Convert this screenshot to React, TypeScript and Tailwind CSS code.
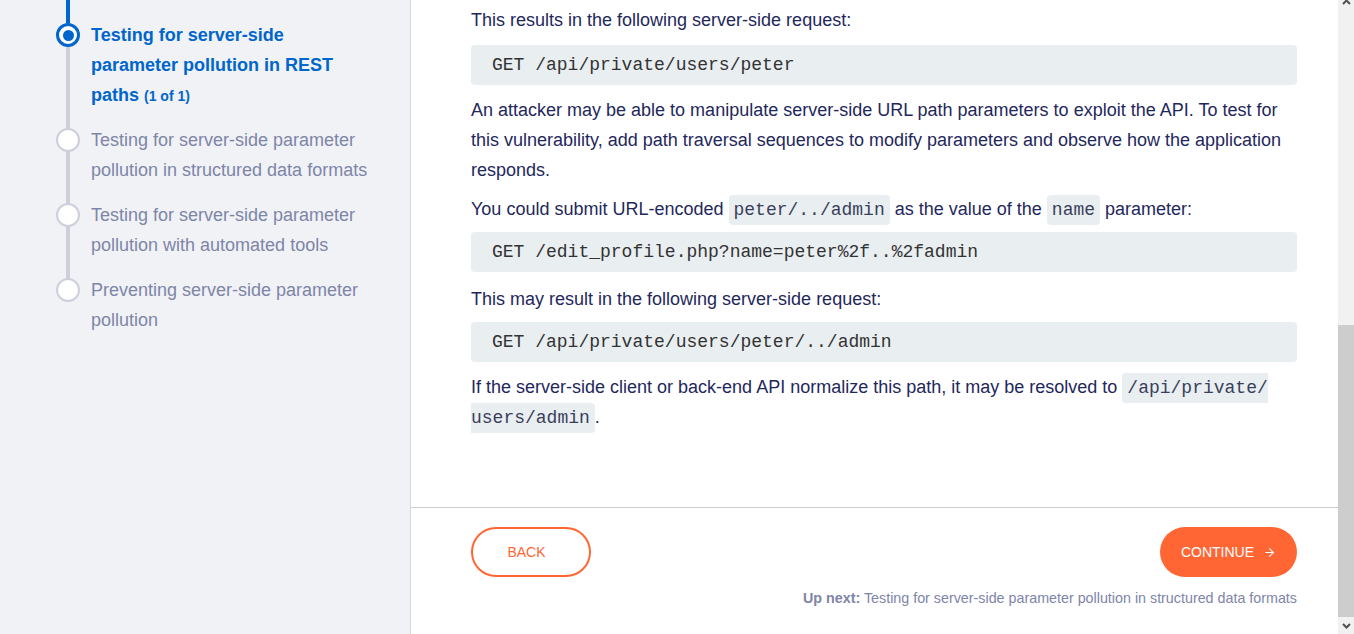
import { ArrowRight } from "lucide-react";

const steps = [
  { title: "Testing for server-side parameter pollution in REST paths", active: true },
  { title: "Testing for server-side parameter pollution in structured data formats" },
  { title: "Testing for server-side parameter pollution with automated tools" },
  { title: "Preventing server-side parameter pollution" },
];

function Code({ children }: { children: React.ReactNode }) {
  return (
    <code className="rounded-[4px] bg-[#e9eef1] px-[5px] py-[5px] font-['Liberation_Mono',monospace] text-[18px] leading-none text-[#3a3f5c]">
      {children}
    </code>
  );
}

function CodeBlock({ children, className = "mb-[10px]" }: { children: string; className?: string }) {
  return (
    <pre
      className={`flex h-[40px] items-center rounded-[4px] bg-[#e9eef1] px-[21px] font-['Liberation_Mono',monospace] text-[18px] text-[#333333] ${className}`}
    >
      {children}
    </pre>
  );
}

function Sidebar() {
  return (
    <aside className="w-[411px] shrink-0 border-r border-[#d5d8e0] bg-[#f0f2f5] pl-[56px] pt-[20px]">
      <div className="relative">
        <div className="absolute left-[10px] top-[-20px] h-[23px] w-[4px] bg-[#0066cc]" />
        <div className="absolute left-[10px] top-[3px] h-[267px] w-[4px] bg-[#cdd0dc]" />
        <ul className="relative flex flex-col gap-[15px]">
          {steps.map((s) => (
            <li key={s.title} className="flex gap-[11px]">
              <div className="flex h-[30px] w-[24px] shrink-0 items-center justify-center">
                {s.active ? (
                  <span className="flex h-[24px] w-[24px] items-center justify-center rounded-full border-[3px] border-[#0066cc] bg-white">
                    <span className="h-[11px] w-[11px] rounded-full bg-[#0066cc]" />
                  </span>
                ) : (
                  <span className="h-[24px] w-[24px] rounded-full border-2 border-[#cdd0dc] bg-white" />
                )}
              </div>
              <p
                className={`w-[280px] text-[18px] leading-[30px] ${
                  s.active ? "font-bold text-[#0066cc]" : "text-[#7e85a8]"
                }`}
              >
                {s.title}
                {s.active ? <span className="ml-[5px] text-[14px] leading-none">(1 of 1)</span> : null}
              </p>
            </li>
          ))}
        </ul>
      </div>
    </aside>
  );
}

export default function App() {
  return (
    <div className="flex h-[634px] w-full overflow-hidden bg-white font-['Liberation_Sans',Arial,sans-serif]">
      <Sidebar />
      <main className="flex min-w-0 flex-1 flex-col">
        <div className="h-[508px] shrink-0 border-b border-[#cccccc] pl-[60px] pr-[41px] pt-[5px] text-[18px] leading-[30px] text-[#1f285c]">
          <p className="mb-[10px]">This results in the following server-side request:</p>
          <CodeBlock>GET /api/private/users/peter</CodeBlock>
          <p className="mb-[9px]">
            An attacker may be able to manipulate server-side URL path parameters to exploit the API. To test for
            this vulnerability, add path traversal sequences to modify parameters and observe how the application
            responds.
          </p>
          <p className="mb-[8px]">
            You could submit URL-encoded <Code>peter/../admin</Code> as the value of the <Code>name</Code> parameter:
          </p>
          <CodeBlock className="mb-[12px]">GET /edit_profile.php?name=peter%2f..%2fadmin</CodeBlock>
          <p className="mb-[8px]">This may result in the following server-side request:</p>
          <CodeBlock>GET /api/private/users/peter/../admin</CodeBlock>
          <p>
            If the server-side client or back-end API normalize this path, it may be resolved to{" "}
            <Code>
              /api/private/
              <wbr />
              users/admin
            </Code>
            .
          </p>
        </div>
        <div className="pl-[60px] pr-[41px] pt-[19px]">
          <div className="flex items-center justify-between">
            <button
              type="button"
              className="h-[50px] w-[120px] rounded-full border-2 border-[#ff6633] bg-white pr-[9px] text-[14px] text-[#ff6633]"
            >
              BACK
            </button>
            <button
              type="button"
              className="flex h-[50px] w-[137px] items-center justify-center gap-[9px] rounded-full bg-[#ff6633] text-[14px] text-white"
            >
              CONTINUE
              <ArrowRight size={13} strokeWidth={2} />
            </button>
          </div>
          <p className="mt-[11px] text-right text-[14.3px] text-[#7e85a8]">
            <span className="font-bold">Up next:</span> Testing for server-side parameter pollution in structured data
            formats
          </p>
        </div>
      </main>
      <div className="flex w-[16px] shrink-0 flex-col bg-[#f1f1f1]">
        <div className="flex h-[6px] items-start justify-center overflow-hidden">
          <svg width="9" height="6" viewBox="0 0 9 6" className="-mt-[1px]">
            <path d="M1 5 L4.5 1.5 L8 5" fill="none" stroke="#505050" strokeWidth="2" />
          </svg>
        </div>
        <div className="h-[319px]" />
        <div className="h-[292px] bg-[#cdcdcd]" />
        <div className="flex h-[17px] items-center justify-center">
          <svg width="9" height="6" viewBox="0 0 9 6">
            <path d="M1 1 L4.5 4.5 L8 1" fill="none" stroke="#505050" strokeWidth="2" />
          </svg>
        </div>
      </div>
    </div>
  );
}
